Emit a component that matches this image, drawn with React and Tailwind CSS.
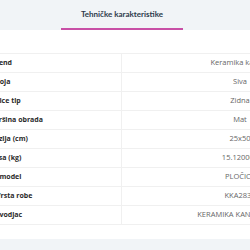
export default function App() {
  const rows = [
    ["Brend", "Keramika kanjiža", "-ml-[9px]"],
    ["Boja", "Siva", "-ml-[5px]"],
    ["Pločice tip", "Zidna", "-ml-[15px]"],
    ["Površina obrada", "Mat", "-ml-[14px]"],
    ["Dimenzija (cm)", "25x50", "-ml-[24px]"],
    ["Masa (kg)", "15.120000", "-ml-[12px]"],
    ["Tip model", "PLOČICE", "-ml-[13px]"],
    ["Vrsta robe", "KKA2835", "-ml-[4px]"],
    ["Proizvodjac", "KERAMIKA KANJIŽA DOO", "-ml-[18px]"],
  ];
  return (
    <div className="w-[250px] h-[250px] overflow-hidden bg-white flex flex-col">
      <div className="h-[30px] bg-[#f1f4f7] flex shrink-0">
        <div className="ml-[61px] w-[122px] flex items-center justify-center border-b-2 border-[#c84fa6]">
          <span className="text-[8px] font-bold text-[#2c3a4b] pb-[1px]" style={{ fontFamily: "Lato, sans-serif" }}>
            Tehničke karakteristike
          </span>
        </div>
      </div>
      <div className="h-[23px] shrink-0" />
      <div className="w-[358px] border-t border-[#f0f0f0] shrink-0" style={{ fontFamily: "'Open Sans', sans-serif" }}>
        {rows.map(([label, value, off]) => (
          <div key={label} className="flex h-[19px] border-b border-[#f0f0f0]">
            <div className="w-[122px] border-r border-[#f0f0f0] flex items-center overflow-hidden">
              <span className={`${off} whitespace-nowrap text-[7px] font-bold text-[#2a2a2a]`}>{label}</span>
            </div>
            <div className="w-[236px] flex items-center justify-center">
              <span className="whitespace-nowrap text-[7.5px] text-[#666666]">{value}</span>
            </div>
          </div>
        ))}
      </div>
      <div className="h-[14px] shrink-0" />
      <div className="flex-1 bg-[#f1f4f7]" />
    </div>
  );
}
